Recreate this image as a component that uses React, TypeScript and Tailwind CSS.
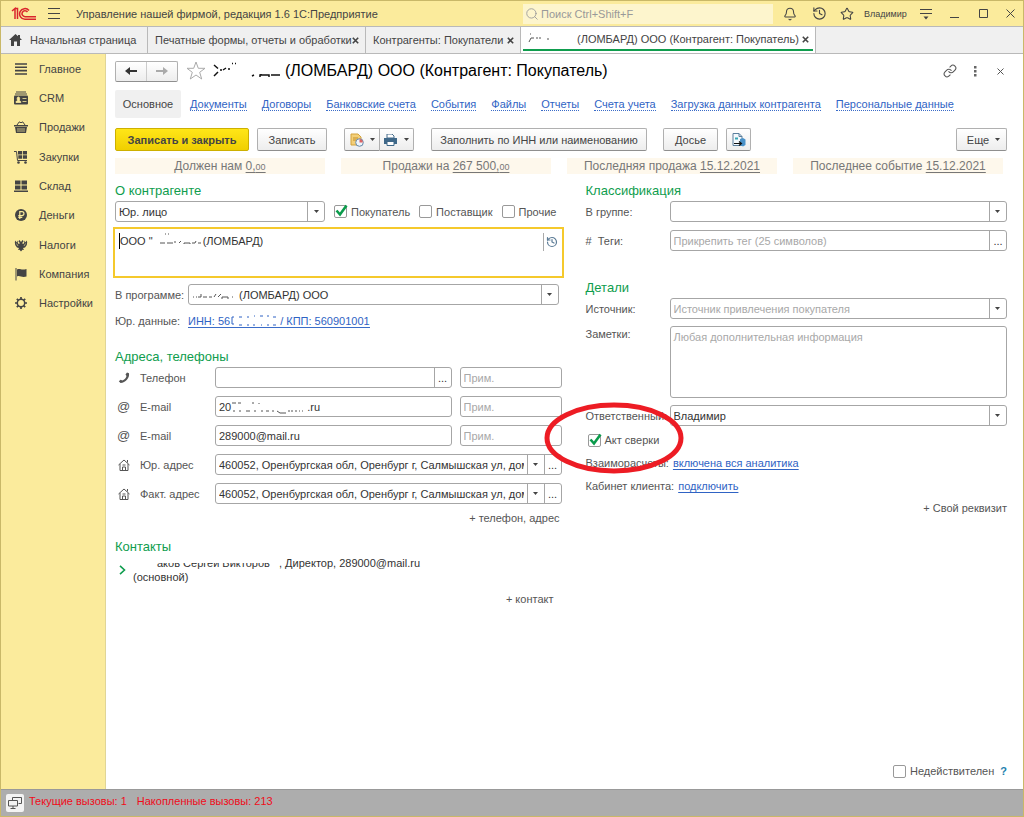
import type { ReactNode } from "react";
import { Bell, History, Link, Search, Star } from "lucide-react";

const links = [
  "Документы",
  "Договоры",
  "Банковские счета",
  "События",
  "Файлы",
  "Отчеты",
  "Счета учета",
  "Загрузка данных контрагента",
  "Персональные данные",
];

const stats = [
  { label: "Должен нам", value: "0,", small: "00" },
  { label: "Продажи на", value: "267 500,", small: "00" },
  { label: "Последняя продажа", value: "15.12.2021", small: "" },
  { label: "Последнее событие", value: "15.12.2021", small: "" },
];

const address = "460052, Оренбургская обл, Оренбург г, Салмышская ул, дом 10";

const menu: { label: string; icon: ReactNode }[] = [
  {
    label: "Главное",
    icon: <path d="M1 2h12M1 5.3h12M1 8.6h12M1 12h12" stroke="currentColor" strokeWidth="1.6" />,
  },
  {
    label: "CRM",
    icon: (
      <>
        <path d="M2 1h10M1 3h12" stroke="currentColor" />
        <rect y="4.5" width="14" height="9" rx="1" fill="currentColor" />
        <path
          d="M2 11.5c0-1.6 1-1.6 1.6-2C2.6 7 3.4 6 4.4 6s1.8 1 .8 3.500c.6.4 1.600.4 1.600 2zM8.500 7.500h4M8.500 10.500h4"
          fill="#fbeb9c"
          stroke="#fbeb9c"
          strokeWidth=".8"
        />
      </>
    ),
  },
  {
    label: "Продажи",
    icon: (
      <>
        <path d="M0 5h14v1.500H0zM1 7h12l-1 6H2z" fill="currentColor" />
        <path d="M3 5l2.500-3.500M11 5L8.500 1.500M5.500 2.500h3" stroke="currentColor" fill="none" />
        <path d="M4 8v4M6 8v4M8 8v4M10 8v4" stroke="#fbeb9c" strokeWidth=".7" />
      </>
    ),
  },
  {
    label: "Закупки",
    icon: (
      <>
        <path d="M0 1.500h2.500l1 9H13" stroke="currentColor" fill="none" />
        <path d="M4 1h4v3.500H4zM8.800 1h4.200v3.500H8.800zM4.300 5.300H8v3.500H4.300zM8.800 5.300H13v3.500H8.800z" fill="currentColor" />
        <circle cx="4.500" cy="12.500" r="1.300" fill="currentColor" />
        <circle cx="11.500" cy="12.500" r="1.300" fill="currentColor" />
      </>
    ),
  },
  {
    label: "Склад",
    icon: (
      <path
        d="M1 1.500h5.500v4H1zM7.500 1.500H13v4H7.500zM1 6.500h5.500v4H1zM7.500 6.500H13v4H7.500zM0 11.500h14V13H0z"
        fill="currentColor"
      />
    ),
  },
  {
    label: "Деньги",
    icon: (
      <>
        <circle cx="7" cy="7" r="6" fill="currentColor" />
        <path d="M5.800 11V3.700h2.200a1.900 1.900 0 010 3.900H4.300M4.300 9.300h4" stroke="#fbeb9c" strokeWidth="1.200" fill="none" />
      </>
    ),
  },
  {
    label: "Налоги",
    icon: (
      <>
        <path
          d="M7 4L5.500 2 4.300 3.300 5.500 4.500V6L4 5.500 3.500 2.500 2.500 4.500 1.500 2.500.8 4l.4 3L3 9.500l2 .5-1 2 1.500-.3L7 13.500l1.500-1.800L10 12l-1-2 2-.5L12.800 7l.4-3-.7-1.500-1 2-1-2L10 5.500 8.500 6V4.500l1.200-1.200L8.500 2z"
          fill="currentColor"
        />
        <path d="M2.500 5.500L4 8M11.500 5.500L10 8" stroke="#fbeb9c" strokeWidth=".6" />
      </>
    ),
  },
  {
    label: "Компания",
    icon: (
      <>
        <path d="M2 1v12.500" stroke="currentColor" />
        <path d="M3 2.500c3-1.500 4 1 9.500-.5v7.500c-5 1.500-6.500-1.500-9.500 0z" fill="currentColor" />
      </>
    ),
  },
  {
    label: "Настройки",
    icon: (
      <>
        <circle cx="7" cy="7" r="3.700" stroke="currentColor" strokeWidth="1.500" fill="none" />
        <path
          d="M7 1v2.500M7 10.500V13M1 7h2.500M10.500 7H13M2.800 2.800l1.700 1.700M9.500 9.500l1.700 1.700M2.800 11.200l1.700-1.700M9.500 4.500l1.700-1.700"
          stroke="currentColor"
          strokeWidth="1.700"
        />
      </>
    ),
  },
];

function Caret() {
  return (
    <svg width="5" height="3" viewBox="0 0 5 3" className="shrink-0">
      <path d="M0 0h5L2.500 3z" fill="#444" />
    </svg>
  );
}

// what is left of a name after it has been wiped out
function Wiped({ width, d }: { width: number; d: string }) {
  return (
    <svg width={width} height="14" viewBox={`0 0 ${width} 14`} className="shrink-0">
      <path d={d} stroke="#555" fill="none" />
    </svg>
  );
}

function Button({ className, children, label }: { className: string; children: ReactNode; label?: string }) {
  return (
    <button
      aria-label={label}
      className={`flex h-[23px] shrink-0 items-center justify-center rounded-xs border border-[#b0b0b0] border-b-[#8f8f8f] bg-linear-to-b from-white to-[#ededed] ${className}`}
    >
      {children}
    </button>
  );
}

function Field({ className = "", children }: { className?: string; children: ReactNode }) {
  return (
    <div className={`flex h-[21px] min-w-0 items-stretch rounded-[3px] border border-[#a6a6a6] bg-white text-[#333] ${className}`}>
      {children}
    </div>
  );
}

function Text({ label, value, placeholder }: { label: string; value?: string; placeholder?: string }) {
  return (
    <input
      aria-label={label}
      defaultValue={value}
      placeholder={placeholder}
      className="w-0 min-w-0 flex-1 px-[3px] outline-none placeholder:text-[#a8a8a8]"
    />
  );
}

function Cell({ label, children }: { label: string; children: ReactNode }) {
  return (
    <button aria-label={label} className="flex w-[17px] shrink-0 items-center justify-center border-l border-[#a6a6a6]">
      {children}
    </button>
  );
}

function Combo({ id, value, className = "" }: { id: string; value: string; className?: string }) {
  return (
    <Field className={className}>
      <select id={id} aria-label={id} className="w-0 min-w-0 flex-1 appearance-none px-[3px] outline-none">
        <option>{value}</option>
      </select>
      <span className="pointer-events-none flex w-[17px] items-center justify-center border-l border-[#a6a6a6]">
        <Caret />
      </span>
    </Field>
  );
}

function Check({ label, checked = false }: { label: string; checked?: boolean }) {
  return (
    <label className="flex items-center gap-1 whitespace-nowrap">
      <span className="relative size-[13px]">
        <input
          type="checkbox"
          defaultChecked={checked}
          className="peer block size-[13px] appearance-none rounded-xs border border-[#999] bg-white"
        />
        <svg
          viewBox="0 0 14 14"
          className="pointer-events-none absolute bottom-0 left-0 hidden size-[14px] peer-checked:block"
        >
          <path d="M2.500 6.500l3.500 4L12.500 1.500" stroke="#0a9b4b" strokeWidth="2.600" fill="none" />
        </svg>
      </span>
      {label}
    </label>
  );
}

function Heading({ children }: { children: ReactNode }) {
  return <h2 className="text-[13px] leading-[18px] text-[#0f9d4e]">{children}</h2>;
}

function ContactRow({ label, icon, children }: { label: string; icon: ReactNode; children: ReactNode }) {
  return (
    <div className="flex items-center">
      <span className="flex w-[25px] justify-center pr-2 text-[13px] text-[#555]">{icon}</span>
      <span className="w-[75px] shrink-0">{label}</span>
      {children}
    </div>
  );
}

const phoneIcon = (
  <svg width="12" height="12" viewBox="0 0 12 12">
    <path
      d="M9 .5l2 .8c.8 4.500-3.500 9.700-8.500 9.700L.8 9.300l1.900-1.500 1.600.8C6.500 7.800 8 6 8.500 4L7.500 2.500z"
      fill="#555"
    />
  </svg>
);

const houseIcon = (
  <svg width="12" height="12" viewBox="0 0 12 12" fill="none" stroke="#555">
    <path d="M.5 6L6 1l5.500 5M2 5v6.500h8V5M4.500 11.500V8h3v3.500M4.500 6h3M9.500 1v2.500" />
  </svg>
);

function TitleBar() {
  return (
    <header className="flex h-[25px] items-center bg-[#fbeb9c] text-[#444]">
      <svg width="26" height="14" viewBox="0 0 26 14" fill="none" stroke="#d9262c" strokeWidth="1.500" className="ml-[10px] shrink-0">
        <path d="M1 4l3-2.500V12M6.500 12V1.500H4M18 3.500A5.300 5.300 0 1014 12.200h11M16.500 5A3 3 0 1014 9.700h11" />
      </svg>
      <button aria-label="Меню" className="ml-[11px] flex w-3 flex-col gap-1">
        <span className="h-px bg-[#444]" />
        <span className="h-px bg-[#444]" />
        <span className="h-px bg-[#444]" />
      </button>
      <span className="ml-4 whitespace-nowrap">Управление нашей фирмой, редакция 1.6 1С:Предприятие</span>
      <label className="ml-auto flex h-5 w-[250px] items-center gap-[2px] bg-[#fdf5cd] pl-[2px]">
        <Search className="size-[14px] text-[#999]" strokeWidth={1.5} />
        <input
          aria-label="Поиск"
          placeholder="Поиск Ctrl+Shift+F"
          className="min-w-0 flex-1 outline-none placeholder:text-[#999]"
        />
      </label>
      <div className="flex w-[250px] shrink-0 items-center pl-[10px]">
        <button aria-label="Уведомления" className="w-[29px]"><Bell className="size-[14px]" strokeWidth={1.8} /></button>
        <button aria-label="История" className="w-7"><History className="size-[15px]" strokeWidth={1.8} /></button>
        <button aria-label="Избранное" className="w-6"><Star className="size-[14px]" strokeWidth={1.8} /></button>
        <span className="text-[9px]">Владимир</span>
        <button aria-label="Настройки" className="ml-auto">
          <svg width="12" height="12" viewBox="0 0 12 12">
            <path d="M0 1.500h12M0 5.500h12" stroke="#444" />
            <path d="M3.500 8.500h5L6 11.500z" fill="#444" />
          </svg>
        </button>
        <button aria-label="Свернуть" className="ml-[18px]">
          <svg width="9" height="9" viewBox="0 0 9 9"><path d="M0 8.500h9" stroke="#444" /></svg>
        </button>
        <button aria-label="Развернуть" className="ml-5">
          <svg width="9" height="9" viewBox="0 0 9 9" fill="none"><path d="M.5.5h8v8h-8z" stroke="#444" /></svg>
        </button>
        <button aria-label="Закрыть" className="mr-2 ml-[18px]">
          <svg width="9" height="9" viewBox="0 0 9 9"><path d="M.5.5l8 8M8.500.5l-8 8" stroke="#444" /></svg>
        </button>
      </div>
    </header>
  );
}

function Close() {
  return (
    <button aria-label="Закрыть вкладку" className="ml-auto">
      <svg width="7" height="7" viewBox="0 0 7 7"><path d="M.8.8l5.400 5.400M6.200.8L.8 6.200" stroke="#444" strokeWidth="1.600" /></svg>
    </button>
  );
}

function Tabs() {
  return (
    <nav className="flex h-7 border-y border-[#b9b9b9] bg-[#f0f0f0] whitespace-nowrap text-[#444]">
      <div className="flex w-[147px] items-center border-r border-[#b9b9b9] pl-2">
        <svg width="13" height="12" viewBox="0 0 13 12" className="mr-2">
          <path d="M6.500 0L0 6h2v6h3V7.500h3V12h3V6h2l-2-1.900V1H9v1.300z" fill="#444" />
        </svg>
        Начальная страница
      </div>
      <div className="flex w-[218px] items-center border-r border-[#b9b9b9] pr-[6px] pl-[7px]">
        Печатные формы, отчеты и обработки
        <Close />
      </div>
      <div className="flex w-[155px] items-center border-r border-[#b9b9b9] pr-[6px] pl-[7px]">
        Контрагенты: Покупатели
        <Close />
      </div>
      <div className="flex w-[295px] border-r border-[#b9b9b9] bg-white px-[2px] pb-[2px]">
        <div className="flex flex-1 items-center border-b-2 border-[#0f9d4e] pt-[2px] pr-1 pl-[5px]">
          <Wiped width={49} d="M1 10l2-4M3 6h3M8 6h2M11 6h2M19 7h2M2 2h1" />
          (ЛОМБАРД) ООО (Контрагент: Покупатель)
          <Close />
        </div>
      </div>
    </nav>
  );
}

function Sidebar() {
  return (
    <aside className="w-[105px] shrink-0 border-r border-[#e0d596] bg-[#fbeb9c] text-[#444]">
      <ul className="flex h-66 flex-col">
        {menu.map((item) => (
          <li key={item.label} className="flex flex-1 items-center">
            <a href="#" className="flex items-center gap-[11px] pl-[13px]">
              <svg width="14" height="14" viewBox="0 0 14 14">{item.icon}</svg>
              {item.label}
            </a>
          </li>
        ))}
      </ul>
    </aside>
  );
}

function TitleRow() {
  return (
    <div className="flex h-[22px] items-center">
      <div className="flex h-[21px] w-[63px] rounded-xs border border-[#b0b0b0] border-b-[#8f8f8f] bg-linear-to-b from-white to-[#ededed]">
        <button aria-label="Назад" className="flex flex-1 items-center justify-center border-r border-[#ccc]">
          <svg width="12" height="8" viewBox="0 0 12 8"><path d="M5 0v3h7v2H5v3L0 4z" fill="#333" /></svg>
        </button>
        <button aria-label="Вперед" className="flex flex-1 items-center justify-center">
          <svg width="12" height="8" viewBox="0 0 12 8"><path d="M7 0v3H0v2h7v3l5-4z" fill="#aaa" /></svg>
        </button>
      </div>
      <svg width="20" height="20" viewBox="0 0 20 20" className="mr-[7px] ml-2">
        <path d="M10 1l2.300 6.300H19l-5.300 4 2 6.700L10 14l-5.700 4 2-6.700L1 7.300h6.700z" fill="none" stroke="#aaa" />
      </svg>
      <svg width="72" height="18" viewBox="0 0 72 18">
        <path
          d="M1 3l4 3.500M1 14l4-4M7 8h2M10 8l3-2M15 7h2M19 1.500h1M22 1.500h1M39 14l2-1M47 15v-2h9v2M58 13h9M48 13v-1"
          stroke="#111"
          strokeWidth="1.500"
          fill="none"
        />
      </svg>
      <h1 className="text-[16px] leading-5 text-black">(ЛОМБАРД) ООО (Контрагент: Покупатель)</h1>
      <button aria-label="Ссылка" className="ml-auto"><Link className="size-[14px] text-[#555]" strokeWidth={1.8} /></button>
      <button aria-label="Еще" className="ml-[17px]">
        <svg width="3" height="11" viewBox="0 0 3 11"><path d="M0 0h2.500v2.500H0zM0 4h2.500v2.500H0zM0 8h2.500v2.500H0z" fill="#666" /></svg>
      </button>
      <button aria-label="Закрыть форму" className="mr-[3px] ml-5">
        <svg width="7" height="7" viewBox="0 0 7 7"><path d="M.5.5l6 6M6.500.5l-6 6" stroke="#555" /></svg>
      </button>
    </div>
  );
}

function Toolbar() {
  return (
    <div className="mt-[10px] flex whitespace-nowrap text-[#444]">
      <button className="h-[23px] w-[134px] rounded-xs border border-[#cdb000] bg-linear-to-b from-[#ffe617] to-[#f0cf00] font-bold">
        Записать и закрыть
      </button>
      <Button className="ml-2 w-[70px]">Записать</Button>
      <Button className="ml-[17px] w-[36px] gap-[6px] rounded-r-none" label="Создать на основании">
        <svg width="14" height="14" viewBox="0 0 14 14">
          <path d="M1 1h7l3 3v8H1z" fill="#f3cf78" stroke="#d3a23c" />
          <path d="M3 5h5M3 7h3" stroke="#c58f27" />
          <circle cx="9.500" cy="9.500" r="3.800" fill="#eef5fb" stroke="#6487a8" />
          <path d="M9.500 9.500V6a3.500 3.500 0 013.300 3.500z" fill="#dc6464" />
        </svg>
        <Caret />
      </Button>
      <Button className="w-[34px] gap-[7px] rounded-l-none border-l-0" label="Печать">
        <svg width="13" height="12" viewBox="0 0 13 12">
          <path d="M3 0h5l2 2v2H3z" fill="#fff" stroke="#466d8c" />
          <path d="M0 4h13v6H0z" fill="#3f6889" />
          <path d="M3 7.500h7v4H3z" fill="#fff" stroke="#3f6889" />
        </svg>
        <Caret />
      </Button>
      <Button className="ml-[17px] w-[216px]">Заполнить по ИНН или наименованию</Button>
      <Button className="ml-4 w-[55px]">Досье</Button>
      <Button className="ml-2 w-[25px]" label="Отправить">
        <svg width="14" height="14" viewBox="0 0 14 14">
          <path d="M1 .5h6l3 3v9H1z" fill="#f4f9fd" stroke="#5b7f9d" />
          <path d="M7 .5v3h3" fill="none" stroke="#5b7f9d" />
          <path d="M8 6l3-1 2.500 1.500V12L11 13.500 8 12z" fill="#4a92c9" />
          <path d="M3 4.500h3v2H3z" fill="#37a6b4" />
          <path d="M2 10.500h7M7 8.500l2.500 2L7 12.500" stroke="#111" fill="none" strokeWidth="1.200" />
        </svg>
      </Button>
      <Button className="ml-auto w-[51px] gap-[6px] pl-1">
        Еще
        <Caret />
      </Button>
    </div>
  );
}

function LeftColumn() {
  return (
    <section>
      <Heading>О контрагенте</Heading>
      <div className="mt-px flex items-center">
        <Combo id="Вид" value="Юр. лицо" className="w-[210px]" />
        <div className="ml-[9px] flex gap-[9px]">
          <Check label="Покупатель" checked />
          <Check label="Поставщик" />
          <Check label="Прочие" />
        </div>
      </div>
      <div className="mt-[7px] flex h-[47px] items-start bg-white pt-1 pr-1 pl-1 text-[#333] outline-2 outline-[#f5c92c]">
        <span className="h-4 w-px bg-black" />
        <span className="leading-4">ООО "</span>
        <Wiped width={50} d="M7 10h5M12 1h1M15 1h1M14 10h6M22 8v2M26 10l2-2M31 11v-1h6v1M39 10h3l1-2M45 10h3" />
        <span className="flex-1 leading-4">(ЛОМБАРД)</span>
        <button aria-label="История наименований" className="flex h-[18px] items-center border-l border-[#aaa] pl-[2px]">
          <History className="size-3 text-[#5b7b96]" strokeWidth={2.4} />
        </button>
      </div>
      <div className="mt-2 flex items-center">
        <label htmlFor="program" className="w-[73px] shrink-0">В программе:</label>
        <Field className="mr-[3px] flex-1">
          <span className="flex flex-1 items-center pl-[3px]">
            <Wiped width={47} d="M1 9h1M4 9h1M6 9h3M9 6v3M11 9h4M17 9h3M22 9l2-3M26 9l3-3M30 11V9h6v2M40 9h1" />
            <input id="program" defaultValue="(ЛОМБАРД) ООО" className="w-0 flex-1 outline-none" />
          </span>
          <Cell label="Выбрать"><Caret /></Cell>
        </Field>
      </div>
      <div className="mt-2 flex h-4 items-center">
        <span className="w-[73px] shrink-0">Юр. данные:</span>
        <a href="#" className="flex items-center border-b border-[#3a6cc8] leading-3 text-[#2f63c4]">
          ИНН: 56
          <svg width="50" height="12" viewBox="0 0 50 12">
            <path
              d="M4 2H2v7h2M9 2h3M9 10h3M17 2h2M17 10h2M24 1h1M23 10h2M30 1h3M31 10h1M37 1h2M37 10h2M43 2h3M43 10h3"
              stroke="#2f63c4"
              fill="none"
            />
          </svg>
          / КПП: 560901001
        </a>
      </div>

      <div className="mt-[19px]"><Heading>Адреса, телефоны</Heading></div>
      <div className="mt-px flex flex-col gap-2">
        <ContactRow label="Телефон" icon={phoneIcon}>
          <Field className="flex-1"><Text label="Телефон" /><Cell label="Выбрать">...</Cell></Field>
          <Field className="ml-2 w-[102px]"><Text label="Примечание" placeholder="Прим." /></Field>
        </ContactRow>
        <ContactRow label="E-mail" icon="@">
          <Field className="flex-1">
            <span className="flex items-center pl-[3px]">
              20
              <Wiped width={76} d="M1 3h4M7 3h3M2 11h2M8 11h2M15 11h4M21 3h2M23 11h2M28 3v1M30 11h2M35 11h3M41 11h2M46 11l3 2h6M57 11h2M60 11h2M64 11h2M68 11h1M71 11h1" />
              .ru
            </span>
          </Field>
          <Field className="ml-2 w-[102px]"><Text label="Примечание" placeholder="Прим." /></Field>
        </ContactRow>
        <ContactRow label="E-mail" icon="@">
          <Field className="flex-1"><Text label="E-mail" value="289000@mail.ru" /></Field>
          <Field className="ml-2 w-[102px]"><Text label="Примечание" placeholder="Прим." /></Field>
        </ContactRow>
        <ContactRow label="Юр. адрес" icon={houseIcon}>
          <Field className="flex-1">
            <Text label="Юр. адрес" value={address} />
            <Cell label="Список"><Caret /></Cell>
            <Cell label="Выбрать">...</Cell>
          </Field>
        </ContactRow>
        <ContactRow label="Факт. адрес" icon={houseIcon}>
          <Field className="flex-1">
            <Text label="Факт. адрес" value={address} />
            <Cell label="Список"><Caret /></Cell>
            <Cell label="Выбрать">...</Cell>
          </Field>
        </ContactRow>
      </div>
      <div className="mt-[6px] flex justify-end pr-[2px]">
        <button className="leading-4">+ телефон, адрес</button>
      </div>

      <div className="mt-3"><Heading>Контакты</Heading></div>
      <div className="flex items-center text-[#333]">
        <svg width="18" height="10" viewBox="0 0 18 10" className="shrink-0">
          <path d="M5 .8L9.500 5 5 9.200" stroke="#0f9d4e" strokeWidth="1.600" fill="none" />
        </svg>
        <p className="leading-[14px]">
          <span className="relative inline-block w-[142px] overflow-hidden align-top whitespace-nowrap">
            <span className="pl-6">аков Сергей Викторов</span>
            <span className="absolute inset-x-0 top-0 h-[7px] bg-white" />
          </span>
          <span className="pl-1">, Директор, 289000@mail.ru</span>
          <br />
          (основной)
        </p>
      </div>
      <div className="mt-[7px] flex justify-end pr-2">
        <button className="leading-4">+ контакт</button>
      </div>
    </section>
  );
}

function RightColumn() {
  return (
    <section className="flex flex-col">
      <Heading>Классификация</Heading>
      <div className="mt-px flex items-center">
        <span className="w-[84px] shrink-0">В группе:</span>
        <Combo id="В группе" value="" className="flex-1" />
      </div>
      <div className="mt-2 flex items-center">
        <span className="w-[84px] shrink-0">#&nbsp; Теги:</span>
        <Field className="flex-1">
          <Text label="Теги" placeholder="Прикрепить тег (25 символов)" />
          <Cell label="Выбрать">...</Cell>
        </Field>
      </div>

      <div className="mt-7"><Heading>Детали</Heading></div>
      <div className="mt-px flex items-center">
        <span className="w-[84px] shrink-0">Источник:</span>
        <Field className="flex-1">
          <Text label="Источник" placeholder="Источник привлечения покупателя" />
          <Cell label="Список"><Caret /></Cell>
        </Field>
      </div>
      <div className="mt-[7px] flex">
        <label htmlFor="notes" className="w-[84px] shrink-0 leading-4">Заметки:</label>
        <textarea
          id="notes"
          placeholder="Любая дополнительная информация"
          className="h-[72px] min-w-0 flex-1 resize-none rounded-[3px] border border-[#a6a6a6] px-[3px] py-[2px] leading-4 outline-none placeholder:text-[#a8a8a8]"
        />
      </div>
      <div className="mt-[7px] flex items-center">
        <span className="w-[84px] shrink-0">Ответственный:</span>
        <Combo id="Ответственный" value="Владимир" className="flex-1" />
      </div>
      <div className="relative mt-[6px] flex h-4 items-center pl-[2px]">
        <Check label="Акт сверки" checked />
        <svg
          width="142"
          height="74"
          viewBox="0 0 142 74"
          className="pointer-events-none absolute -top-8 -left-11 z-10"
        >
          <ellipse cx="72" cy="38" rx="67" ry="33" fill="none" stroke="#ed1c24" strokeWidth="5" />
        </svg>
      </div>
      <div className="mt-[7px] flex h-4 items-center gap-1">
        Взаиморасчеты:
        <a href="#" className="text-[#2f63c4] underline underline-offset-2">включена вся аналитика</a>
      </div>
      <div className="mt-[7px] flex h-4 items-center gap-1">
        Кабинет клиента:
        <a href="#" className="text-[#2f63c4] underline underline-offset-2">подключить</a>
      </div>
      <div className="mt-[6px] flex justify-end">
        <button className="leading-4">+ Свой реквизит</button>
      </div>
    </section>
  );
}

export default function App() {
  return (
    <div className="flex min-h-screen flex-col border border-[#c9b868] bg-white font-['Liberation_Sans',Arial,sans-serif] text-[11px] leading-4 text-[#555]">
      <TitleBar />
      <Tabs />
      <div className="flex flex-1">
        <Sidebar />
        <main className="flex min-w-0 flex-1 flex-col pt-[6px] pr-4 pl-[9px]">
          <TitleRow />
          <nav className="mt-2 flex h-7 items-center gap-[15px] whitespace-nowrap">
            <span className="mr-[-6px] flex h-7 w-[66px] items-center justify-center rounded-xs bg-[#f0f0f0] text-[#444]">
              Основное
            </span>
            {links.map((link) => (
              <a key={link} href="#" className="border-b border-dotted border-[#3a6cc8] leading-3 text-[#2f63c4]">
                {link}
              </a>
            ))}
          </nav>
          <Toolbar />
          <div className="mt-[7px] grid grid-cols-4 gap-4 pr-1 text-[12px] leading-4 text-[#777]">
            {stats.map((stat) => (
              <div key={stat.label} className="h-4 bg-[#fef8ec] text-center whitespace-nowrap">
                {stat.label}{" "}
                <a href="#" className="underline underline-offset-2">
                  {stat.value}
                  <span className="text-[9px]">{stat.small}</span>
                </a>
              </div>
            ))}
          </div>
          <div className="mt-2 grid grid-cols-[446fr_421fr] gap-6">
            <LeftColumn />
            <RightColumn />
          </div>
          <div className="mt-auto mb-[10px] flex items-center justify-end gap-[6px]">
            <Check label="Недействителен" />
            <a href="#" className="font-bold text-[#1c7fae]">?</a>
          </div>
        </main>
      </div>
      <footer className="flex h-[27px] items-center border-t border-[#999] bg-[#adadad] text-[#f00b1a]">
        <button aria-label="Окна" className="ml-[5px] flex size-[18px] items-center justify-center rounded-xs bg-[#f3f3f3]">
          <svg width="14" height="12" viewBox="0 0 14 12" fill="none" stroke="#555">
            <path d="M4.500 3V.5h9v6h-3M.5 3.500h9v5.500h-9zM5 9v2.500M2.500 11.500h5" />
          </svg>
        </button>
        <div className="ml-[5px] flex gap-[10px] pb-1">
          <span>Текущие вызовы: 1</span>
          <span>Накопленные вызовы: 213</span>
        </div>
      </footer>
    </div>
  );
}
